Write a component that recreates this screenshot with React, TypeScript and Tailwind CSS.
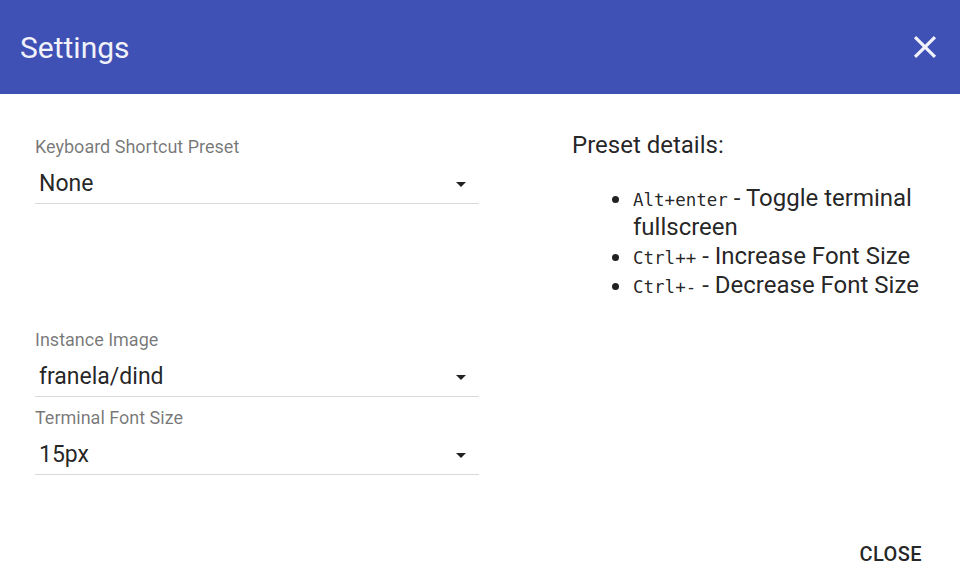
import React from "react";

function Caret() {
  return (
    <svg width="24" height="24" viewBox="0 0 24 24" className="shrink-0">
      <path d="M7 10l5 5 5-5z" fill="rgba(0,0,0,0.87)" />
    </svg>
  );
}

function SelectField({ label, value }: { label: string; value: string }) {
  return (
    <div className="flex flex-col">
      <div className="text-[18px] leading-[22px] text-[rgba(0,0,0,0.54)]">{label}</div>
      <div className="flex items-center justify-between border-b border-[#d9d9d9] pl-[4px] pr-[6px] h-[39px] mt-[7px]">
        <span className="text-[23px] text-[rgba(0,0,0,0.87)]">{value}</span>
        <Caret />
      </div>
    </div>
  );
}

const mono = { fontFamily: "'DejaVu Sans Mono', monospace" };

export default function App() {
  return (
    <div className="w-[960px] h-[587px] bg-white flex flex-col" style={{ fontFamily: "Roboto, 'Liberation Sans', sans-serif" }}>
      <div className="h-[94px] bg-[#3f51b5] flex items-center justify-between pl-[20px] pr-[16px] shrink-0">
        <div className="text-[30px] text-[#f2f2fb] font-normal">Settings</div>
        <svg width="38" height="38" viewBox="0 0 24 24">
          <path d="M19 6.41L17.59 5 12 10.59 6.41 5 5 6.41 10.59 12 5 17.59 6.41 19 12 13.41 17.59 19 19 17.59 13.41 12z" fill="#f2f2fb" />
        </svg>
      </div>
      <div className="flex flex-1">
        <div className="w-[444px] ml-[35px] pt-[42px] flex flex-col">
          <SelectField label="Keyboard Shortcut Preset" value="None" />
          <div className="h-[125px]" />
          <SelectField label="Instance Image" value="franela/dind" />
          <div className="h-[10px]" />
          <SelectField label="Terminal Font Size" value="15px" />
        </div>
        <div className="ml-[93px] pt-[37px] text-[rgba(0,0,0,0.87)]">
          <div className="text-[24px] leading-[28px]">Preset details:</div>
          <ul className="list-disc pl-[61px] mt-[25px] text-[24px] leading-[29px] w-[362px]">
            <li>
              <code className="text-[17.5px] leading-none" style={mono}>Alt+enter</code> - Toggle terminal fullscreen
            </li>
            <li>
              <code className="text-[17.5px] leading-none" style={mono}>Ctrl++</code> - Increase Font Size
            </li>
            <li>
              <code className="text-[17.5px] leading-none" style={mono}>Ctrl+-</code> - Decrease Font Size
            </li>
          </ul>
        </div>
      </div>
      <div className="flex justify-end pr-[38px] pb-[18px]">
        <span className="text-[20px] font-medium text-[rgba(0,0,0,0.87)] tracking-[0.4px]">CLOSE</span>
      </div>
    </div>
  );
}
